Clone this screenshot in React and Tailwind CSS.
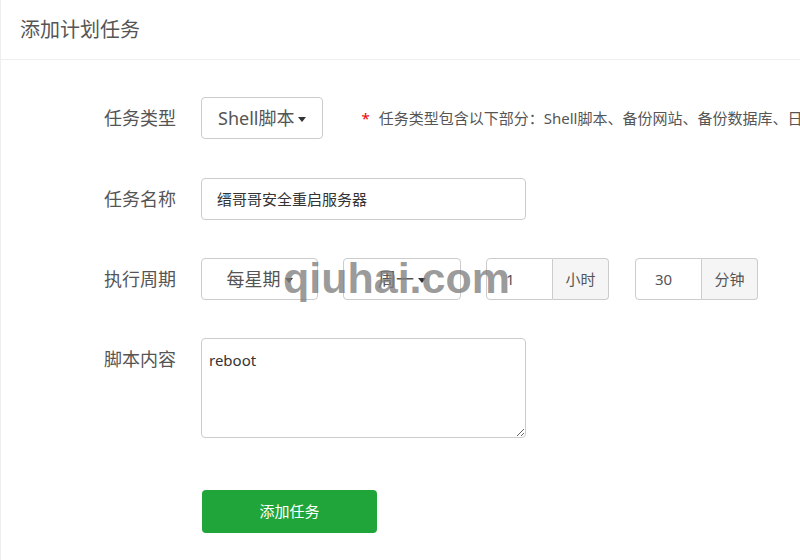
import React from "react";

const font = "font-['Noto_Sans','Noto_Sans_CJK_SC',sans-serif]";

const Caret = () => (
  <span className="inline-block w-0 h-0 border-x-[4px] border-x-transparent border-t-[5px] border-t-[#333] ml-[4px] mt-[2px]" />
);

const Row = ({ label, children, className = "" }) => (
  <div className={`flex items-start ${className}`}>
    <label className="w-[175px] shrink-0 text-right text-[18px] leading-[42px] text-[#555]">
      {label}
    </label>
    <div className="ml-[25px] flex items-center">{children}</div>
  </div>
);

const InputGroup = ({ value, unit, className = "" }) => (
  <div className={`flex h-[42px] ${className}`}>
    <div className="w-[67px] border border-[#ccc] rounded-l-[4px] pl-[19px] flex items-center text-[15px] text-[#555]">
      {value}
    </div>
    <div className="w-[56px] border border-l-0 border-[#ccc] rounded-r-[4px] bg-[#f5f5f5] flex items-center justify-center text-[15px] text-[#555]">
      {unit}
    </div>
  </div>
);

export default function App() {
  return (
    <div className={`w-[800px] h-[560px] overflow-hidden bg-white ${font}`}>
      <div className="relative w-[1100px] h-[560px] border-l border-[#eee]">
        <div className="h-[60px] border-b border-[#eee] pl-[19px] flex items-center text-[20px] text-[#555]">
          添加计划任务
        </div>

        <div className="pt-[37px]">
          <Row label="任务类型">
            <button className="h-[42px] px-[16px] border border-[#ccc] rounded-[4px] bg-white text-[18px] text-[#555] flex items-center">
              Shell脚本
              <Caret />
            </button>
            <span className="ml-[38px] text-[15px] text-[#e00] mr-[9px]">*</span>
            <span className="text-[15px] text-[#555] whitespace-nowrap">
              任务类型包含以下部分：Shell脚本、备份网站、备份数据库、日志切割、释放内存、访问URL
            </span>
          </Row>

          <Row label="任务名称" className="mt-[39px]">
            <div className="w-[325px] h-[42px] border border-[#ccc] rounded-[4px] pl-[15px] flex items-center text-[15px] text-[#333]">
              缙哥哥安全重启服务器
            </div>
          </Row>

          <Row label="执行周期" className="mt-[38px]">
            <button className="w-[117px] h-[42px] border border-[#ccc] rounded-[4px] bg-white text-[18px] text-[#555] flex items-center justify-center">
              每星期
              <Caret />
            </button>
            <button className="ml-[25px] w-[118px] h-[42px] border border-[#ccc] rounded-[4px] bg-white text-[18px] text-[#555] flex items-center justify-center">
              周一
              <Caret />
            </button>
            <InputGroup value="1" unit="小时" className="ml-[25px]" />
            <InputGroup value="30" unit="分钟" className="ml-[26px]" />
          </Row>

          <Row label="脚本内容" className="mt-[38px]">
            <textarea
              readOnly
              defaultValue="reboot"
              className="w-[325px] h-[100px] border border-[#ccc] rounded-[4px] px-[7px] py-[10px] text-[15px] leading-[22px] text-[#333] outline-none"
            />
          </Row>

          <div className="mt-[52px] ml-[201px]">
            <button className="w-[175px] h-[43px] rounded-[4px] bg-[#20a53a] text-white text-[15px]">
              添加任务
            </button>
          </div>
        </div>

        <span className="absolute left-[282px] top-[257px] text-[43px] leading-[43px] font-bold font-['Liberation_Sans',Arial,sans-serif] text-[#7f7f7f]/80 pointer-events-none">
          qiuhai.com
        </span>
      </div>
    </div>
  );
}
